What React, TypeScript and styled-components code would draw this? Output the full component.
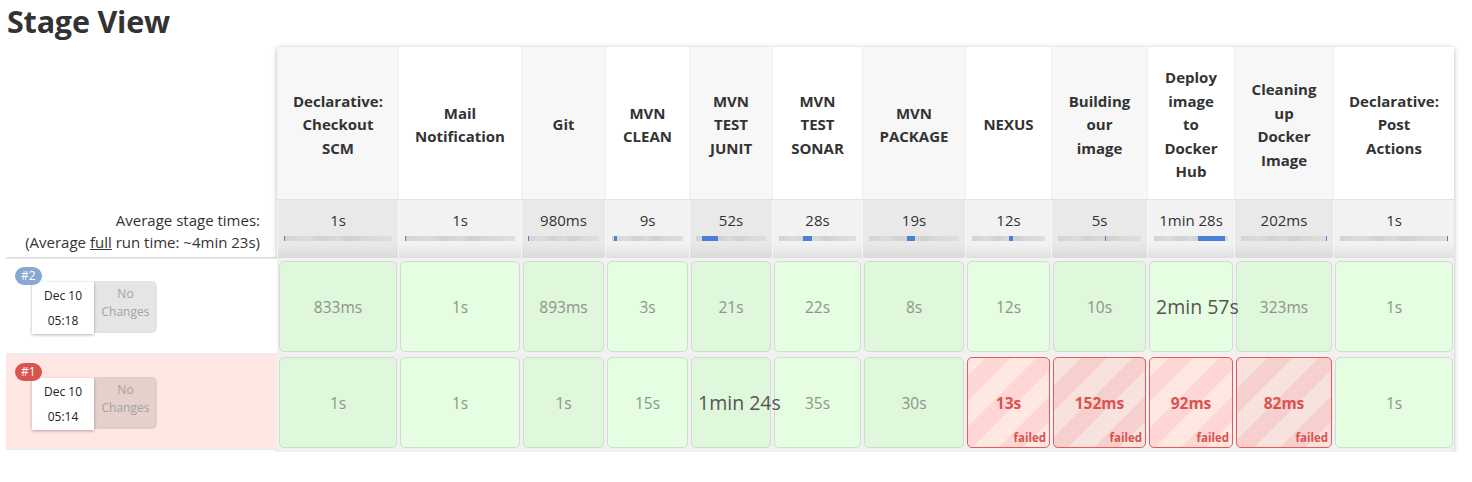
import React from "react";
import styled, { createGlobalStyle, css } from "styled-components";

const GlobalStyle = createGlobalStyle`
  html, body { margin: 0; padding: 0; background: #fff; }
  body { font-family: "Open Sans", "Noto Sans", sans-serif; color: #333; }
`;

type Stage = { lines: string[]; w: number; avg: string; bar: [number, number] };

const stages: Stage[] = [
  { lines: ["Declarative:", "Checkout", "SCM"], w: 121, avg: "1s", bar: [0, 1] },
  { lines: ["Mail", "Notification"], w: 123, avg: "1s", bar: [0, 1] },
  { lines: ["Git"], w: 84, avg: "980ms", bar: [0, 1.5] },
  { lines: ["MVN", "CLEAN"], w: 84, avg: "9s", bar: [3, 4] },
  { lines: ["MVN", "TEST", "JUNIT"], w: 83, avg: "52s", bar: [9, 22] },
  { lines: ["MVN", "TEST", "SONAR"], w: 90, avg: "28s", bar: [31, 12] },
  { lines: ["MVN", "PACKAGE"], w: 103, avg: "19s", bar: [42, 9] },
  { lines: ["NEXUS"], w: 86, avg: "12s", bar: [51, 5] },
  { lines: ["Building", "our", "image"], w: 96, avg: "5s", bar: [57, 1.2] },
  { lines: ["Deploy", "image", "to", "Docker", "Hub"], w: 87, avg: "1min 28s", bar: [59, 37] },
  { lines: ["Cleaning", "up", "Docker", "Image"], w: 99, avg: "202ms", bar: [98.8, 1.2] },
  { lines: ["Declarative:", "Post", "Actions"], w: 121, avg: "1s", bar: [99, 1] },
];

type Cell = { t: string; big?: boolean; failed?: boolean };
type Build = { id: string; date: string; time: string; failed: boolean; cells: Cell[] };

const builds: Build[] = [
  {
    id: "#2",
    date: "Dec 10",
    time: "05:18",
    failed: false,
    cells: [
      { t: "833ms" }, { t: "1s" }, { t: "893ms" }, { t: "3s" }, { t: "21s" }, { t: "22s" },
      { t: "8s" }, { t: "12s" }, { t: "10s" }, { t: "2min 57s", big: true }, { t: "323ms" }, { t: "1s" },
    ],
  },
  {
    id: "#1",
    date: "Dec 10",
    time: "05:14",
    failed: true,
    cells: [
      { t: "1s" }, { t: "1s" }, { t: "1s" }, { t: "15s" }, { t: "1min 24s", big: true }, { t: "35s" },
      { t: "30s" }, { t: "13s", failed: true }, { t: "152ms", failed: true }, { t: "92ms", failed: true },
      { t: "82ms", failed: true }, { t: "1s" },
    ],
  },
];

const Page = styled.div`
  padding: 0 0 0 6px;
`;

const Title = styled.h2`
  margin: 0;
  height: 47px;
  padding: 0 0 0 1px;
  font-size: 30.5px;
  line-height: 43px;
  font-weight: 700;
  color: #333;
  letter-spacing: -0.2px;
`;

const Layout = styled.div`
  display: flex;
  align-items: flex-start;
`;

const LeftCol = styled.div`
  width: 271px;
  display: flex;
  flex-direction: column;
`;

const HeadSpacer = styled.div`
  height: 153px;
`;

const AvgLabel = styled.div`
  height: 58px;
  box-sizing: border-box;
  padding: 9px 17px 0 0;
  text-align: right;
  font-size: 15px;
  line-height: 22px;
  color: #333;
  border-bottom: 1px solid #ddd;
`;

const Under = styled.span`
  text-decoration: underline;
`;

const BuildLabel = styled.div<{ $failed: boolean }>`
  position: relative;
  height: 96px;
  box-sizing: border-box;
  background: ${(p) => (p.$failed ? "#ffe8e3" : "#fff")};
  border-top: 1px solid #ececec;
  border-bottom: 1px solid #ececec;
  padding: 22px 0 0 26px;
`;

const Badge = styled.span<{ $failed: boolean }>`
  position: absolute;
  left: 9px;
  top: 8px;
  height: 18px;
  padding: 0 6px;
  border-radius: 9px;
  background: ${(p) => (p.$failed ? "#d9534f" : "#87a9d1")};
  color: #fff;
  font-size: 12px;
  line-height: 18px;
  z-index: 2;
`;

const BuildInfo = styled.div`
  display: flex;
  align-items: flex-start;
`;

const DateBox = styled.div`
  width: 62px;
  height: 52px;
  background: #fff;
  box-shadow: 0 1px 3px rgba(0, 0, 0, 0.3);
  display: flex;
  flex-direction: column;
  align-items: center;
  justify-content: center;
  gap: 6px;
  font-size: 12px;
  line-height: 19px;
  color: #222;
  margin-top: 1px;
  position: relative;
  z-index: 1;
`;

const Changes = styled.div`
  width: 63px;
  height: 52px;
  box-sizing: border-box;
  background: rgba(0, 0, 0, 0.1);
  border-radius: 0 6px 6px 0;
  color: #a3a3a3;
  font-size: 12px;
  line-height: 18px;
  text-align: center;
  padding-top: 4px;
  box-shadow: inset 0 0 1px rgba(0, 0, 0, 0.15);
`;

const Table = styled.div<{ $cols: string }>`
  display: grid;
  grid-template-columns: ${(p) => p.$cols};
  grid-template-rows: 153px 58px 96px 96px;
  box-shadow: 0 1px 5px rgba(0, 0, 0, 0.28);
  background: #f0f0f0;
  padding-bottom: 2px;
`;

const HeadCell = styled.div<{ $odd: boolean }>`
  background: ${(p) => (p.$odd ? "#f7f7f7" : "#fff")};
  border-left: 1px solid #f0f0f0;
  border-bottom: 1px solid #e2e2e2;
  display: flex;
  flex-direction: column;
  align-items: center;
  justify-content: center;
  text-align: center;
  font-weight: 700;
  font-size: 15px;
  line-height: 23.5px;
  color: #333;
  padding-top: 4px;
`;

const AvgCell = styled.div<{ $odd: boolean }>`
  background: ${(p) =>
    p.$odd
      ? "linear-gradient(to bottom, #e9e9e9 0, #e9e9e9 44px, #dadada 100%)"
      : "linear-gradient(to bottom, #f2f2f2 0, #f2f2f2 44px, #e0e0e0 100%)"};
  border-left: 1px solid #f6f6f6;
  padding: 9px 6px 0;
  display: flex;
  flex-direction: column;
  align-items: center;
  font-size: 15px;
  line-height: 22px;
  color: #333;
`;

const Bar = styled.div`
  position: relative;
  align-self: stretch;
  height: 5px;
  margin-top: 5px;
  background: linear-gradient(
    to right,
    #d3d3d3 0%,
    #dcdcdc 20%,
    #d1d1d1 35%,
    #dadada 50%,
    #cfcfcf 60%,
    #d8d8d8 75%,
    #dedede 100%
  );
`;

const BarFill = styled.div`
  position: absolute;
  top: 0;
  bottom: 0;
  min-width: 1px;
  background: #4a80d8;
`;

const StageCell = styled.div`
  padding: 3px 1px 2px 2px;
  display: flex;
  background: #f1f1f1;
`;

const stripes = (a: string, b: string) => css`
  background: repeating-linear-gradient(-45deg, ${a} 0, ${a} 18px, ${b} 18px, ${b} 36px);
`;

const Box = styled.div<{ $odd: boolean; $failed: boolean }>`
  position: relative;
  flex: 1;
  min-width: 0;
  box-sizing: border-box;
  border-radius: 5px;
  display: flex;
  align-items: center;
  justify-content: center;
  padding: 0 6px;
  white-space: nowrap;
  ${(p) =>
    p.$failed
      ? css`
          border: 1px solid #e25d59;
          ${p.$odd ? stripes("#f7e2dd", "#f6d0cf") : stripes("#ffe7e2", "#fdd6d5")}
        `
      : css`
          border: 1px solid #cfdccf;
          background: ${p.$odd ? "#dff7da" : "#e5fee1"};
        `}
`;

const Duration = styled.span<{ $big: boolean; $failed: boolean }>`
  display: block;
  width: 100%;
  text-align: center;
  overflow: visible;
  font-size: ${(p) => (p.$big ? "19.5px" : p.$failed ? "15.5px" : "15.5px")};
  color: ${(p) => (p.$failed ? "#d9534f" : p.$big ? "#555" : "#8c948c")};
  font-weight: ${(p) => (p.$failed ? 700 : 400)};
  position: relative;
  z-index: 1;
`;

const FailedTag = styled.span`
  position: absolute;
  right: 3px;
  bottom: 1px;
  font-size: 11.5px;
  font-weight: 700;
  color: #d9534f;
  line-height: 16px;
`;

export default function App() {
  const cols = stages.map((s) => `${s.w}px`).join(" ");
  return (
    <Page>
      <GlobalStyle />
      <Title>Stage View</Title>
      <Layout>
        <LeftCol>
          <HeadSpacer />
          <AvgLabel>
            Average stage times:
            <br />
            (Average <Under>full</Under> run time: ~4min 23s)
          </AvgLabel>
          {builds.map((b) => (
            <BuildLabel key={b.id} $failed={b.failed}>
              <Badge $failed={b.failed}>{b.id}</Badge>
              <BuildInfo>
                <DateBox>
                  <span>{b.date}</span>
                  <span>{b.time}</span>
                </DateBox>
                <Changes>
                  No
                  <br />
                  Changes
                </Changes>
              </BuildInfo>
            </BuildLabel>
          ))}
        </LeftCol>
        <Table $cols={cols}>
          {stages.map((s, i) => (
            <HeadCell key={`h${i}`} $odd={i % 2 === 0}>
              {s.lines.map((l) => (
                <span key={l}>{l}</span>
              ))}
            </HeadCell>
          ))}
          {stages.map((s, i) => (
            <AvgCell key={`a${i}`} $odd={i % 2 === 0}>
              <span>{s.avg}</span>
              <Bar>
                <BarFill style={{ left: `${s.bar[0]}%`, width: `${s.bar[1]}%` }} />
              </Bar>
            </AvgCell>
          ))}
          {builds.map((b) =>
            b.cells.map((c, i) => (
              <StageCell key={`${b.id}-${i}`}>
                <Box $odd={i % 2 === 0} $failed={!!c.failed}>
                  <Duration $big={!!c.big} $failed={!!c.failed}>
                    {c.t}
                  </Duration>
                  {c.failed && <FailedTag>failed</FailedTag>}
                </Box>
              </StageCell>
            ))
          )}
        </Table>
      </Layout>
    </Page>
  );
}
